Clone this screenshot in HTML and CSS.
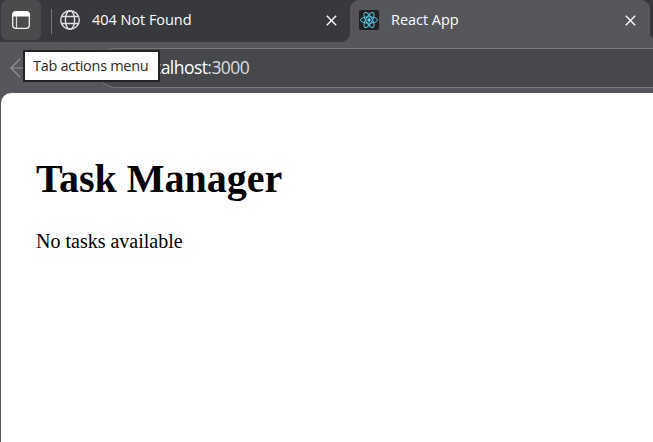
FILE: index.html
```html
<!DOCTYPE html>
<html lang="en">
<head>
<meta charset="utf-8">
<title>React App</title>
<link rel="stylesheet" href="styles.css">
</head>
<body>
<div class="browser">
  <header class="tabstrip">
    <button class="tab-actions" aria-label="Tab actions menu">
      <svg width="18" height="18" viewBox="0 0 18 18"><rect x=".7" y=".7" width="16.6" height="16.6" rx="3" fill="none" stroke="#f4f4f4" stroke-width="1.3"/><path d="M.5 5.4V3.5Q.5.5 3.5.5h11Q17.5.5 17.5 3.5v1.9z" fill="#fff"/><path d="M4.5 5v12" stroke="#d8d8d8" stroke-width="1.2"/></svg>
    </button>
    <span class="divider"></span>
    <div class="tab tab-idle">
      <svg class="globe" width="20" height="20" viewBox="0 0 20 20" fill="none" stroke="#e0e0e1" stroke-width="1.4"><circle cx="10" cy="10" r="9.3"/><ellipse cx="10" cy="10" rx="4.6" ry="9.3"/><path d="M1.5 6.5h17M1.5 13.5h17"/></svg>
      <span class="tab-title title-idle">404 Not Found</span>
      <svg class="close" width="11" height="11" viewBox="0 0 11 11"><path d="M.8.8l9.4 9.4M10.2.8L.8 10.2" stroke="#fff" stroke-width="1.4"/></svg>
    </div>
    <div class="tab tab-active">
      <svg class="favicon" width="20" height="20" viewBox="0 0 20 20"><rect width="20" height="20" rx="2" fill="#202224"/><g fill="none" stroke="#58c4e0" stroke-width="1"><ellipse cx="10" cy="10" rx="8.5" ry="3.2"/><ellipse cx="10" cy="10" rx="8.5" ry="3.2" transform="rotate(60 10 10)"/><ellipse cx="10" cy="10" rx="8.5" ry="3.2" transform="rotate(120 10 10)"/></g><circle cx="10" cy="10" r="1.7" fill="#61dafb"/></svg>
      <span class="tab-title title-active">React App</span>
      <svg class="close" width="11" height="11" viewBox="0 0 11 11"><path d="M.8.8l9.4 9.4M10.2.8L.8 10.2" stroke="#fff" stroke-width="1.4"/></svg>
    </div>
  </header>
  <div class="toolbar">
    <svg class="back" width="20" height="20" viewBox="0 0 20 20"><path d="M10 1L1 10l9 9M1 10h19" fill="none" stroke="#929397" stroke-width="1.2"/></svg>
    <div class="address"><span class="url">localhost<span class="port">:3000</span></span></div>
    <div class="tooltip"><span>Tab actions menu</span></div>
  </div>
  <main class="page">
    <h1>Task Manager</h1>
    <p>No tasks available</p>
  </main>
</div>
</body>
</html>
```
FILE: styles.css
```css
* { box-sizing: border-box; }
body { margin: 0; overflow: hidden; }
.browser {
  width: 653px;
  height: 442px;
  display: flex;
  flex-direction: column;
  background: #56575c;
  font-family: "Open Sans", "Noto Sans", sans-serif;
}
.tabstrip {
  height: 42px;
  flex: none;
  display: flex;
  align-items: flex-start;
  background: #38393c;
}
.tab-actions {
  width: 40px;
  height: 40px;
  margin-left: 1px;
  padding: 0 0 0 11px;
  display: flex;
  align-items: center;
  border: 0;
  border-radius: 6px;
  background: #4a4b4d;
}
.divider {
  width: 1px;
  height: 25px;
  margin: 9px 8px 0 10px;
  background: #77787b;
}
.tab {
  height: 42px;
  display: flex;
  align-items: center;
  padding-bottom: 2px;
}
.tab-idle { width: 290px; padding-right: 13px; }
.tab-active {
  position: relative;
  width: 300px;
  padding-left: 9px;
  padding-right: 14px;
  border-radius: 9px 9px 0 0;
  background: #56575c;
}
.tab-active::before,
.tab-active::after {
  content: "";
  position: absolute;
  bottom: 0;
  width: 9px;
  height: 9px;
}
.tab-active::before {
  right: 100%;
  background: radial-gradient(circle at 0 0, transparent 8.5px, #56575c 9px);
}
.tab-active::after {
  left: 100%;
  background: radial-gradient(circle at 100% 0, transparent 8.5px, #56575c 9px);
}
.tab-title {
  flex: 1;
  margin-left: 12px;
  font-size: 14.5px;
  letter-spacing: -0.04px;
  line-height: 20px;
  color: #fff;
  white-space: nowrap;
}
.close { flex: none; margin-top: 1px; }
.toolbar {
  position: relative;
  height: 51px;
  flex: none;
  display: flex;
  align-items: flex-start;
  background: #56575c;
}
.back { margin: 16px 0 0 10px; flex: none; }
.address {
  flex: 1;
  height: 40px;
  margin: 6px -30px 0 66px;
  padding: 0 0 2px 42px;
  display: flex;
  align-items: center;
  border: 1px solid #77787c;
  border-radius: 20px;
  background: #47484b;
}
.url { font-size: 17.5px; letter-spacing: -0.55px; color: #fff; white-space: nowrap; }
.port { color: #dcdce0; }
.tooltip {
  position: absolute;
  left: 23px;
  top: 8px;
  width: 137px;
  height: 32px;
  padding: 0 0 2px 8px;
  display: flex;
  align-items: center;
  border: 2px solid #222324;
  background: #fff;
  color: #2b2b2b;
  font-size: 14.5px;
  letter-spacing: -0.3px;
  white-space: nowrap;
}
.page {
  flex: 1;
  margin-left: 1px;
  padding: 63px 35px 0;
  border-radius: 10px 0 0 0;
  background: #fff;
  color: #000;
  font-family: "Liberation Serif", serif;
}
.page h1 { margin: 0; font-size: 40px; line-height: 46px; }
.page p { margin: 28px 0 0; font-size: 20px; line-height: 23px; }
```
